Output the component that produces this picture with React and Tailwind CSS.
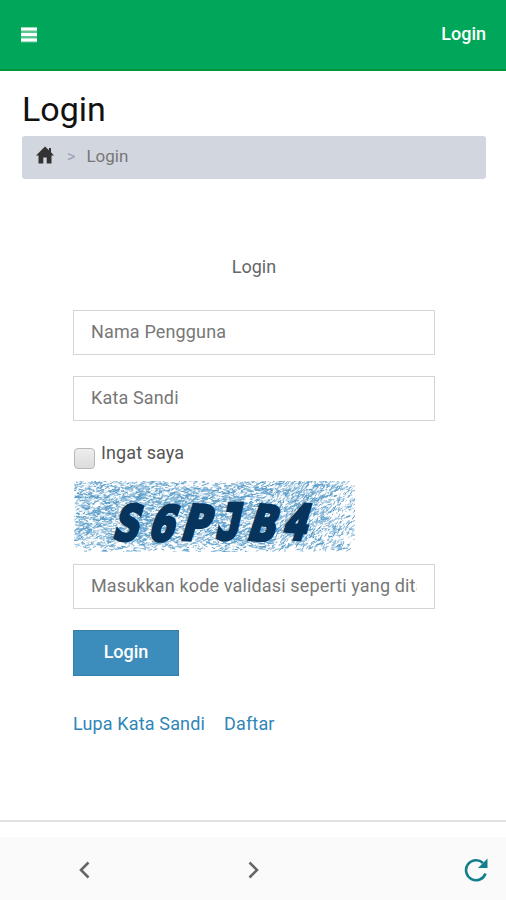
import React from 'react';

// small seeded generator, keeps the captcha noise stable between renders
const createRandom = (seed) => () => {
  seed = (seed * 16807) % 2147483647;
  return seed / 2147483647;
};

// short strokes, flat on the left and steeper towards the right edge
const scratches = (seed, count, maxLength, falloff) => {
  const random = createRandom(seed);
  let d = '';
  for (let i = 0; i < count; i++) {
    const x = random() * 279;
    const y = random() * 71;
    const edge = Math.max(Math.abs(x - 115) / 165, Math.abs(y - 33) / 36);
    if (random() < edge * edge * falloff) continue;
    const slope = x > 195 ? -0.7 : -0.1;
    const angle = slope + (random() - 0.5) * 1.2;
    const length = 1 + random() * maxLength;
    d += `M${x.toFixed(1)} ${y.toFixed(1)}l${(Math.cos(angle) * length).toFixed(1)} ${(Math.sin(angle) * length).toFixed(1)}`;
  }
  return d;
};

const lightScratches = scratches(733, 5200, 7, 0.75);
const blueScratches = scratches(981, 2600, 7, 0.75);
const whiteScratches = scratches(4127, 1500, 4, 0);

const captchaLetters = [
  { char: 'S', x: 38, y: 58, rotate: 3, width: 25 },
  { char: '6', x: 73, y: 58, rotate: 5, width: 25 },
  { char: 'P', x: 106, y: 58, rotate: 4, width: 27 },
  { char: 'J', x: 141, y: 58, rotate: -1, width: 24 },
  { char: 'B', x: 173, y: 58, rotate: 5, width: 25 },
  { char: '4', x: 207, y: 57, rotate: 4, width: 24 },
];

const Captcha = () => (
  <svg className="ml-px block h-[71px] w-[281px]" viewBox="0 0 281 71">
    <rect width="281" height="71" fill="#fff" />
    <path d={lightScratches} stroke="#94bfdc" strokeWidth="1.1" fill="none" />
    <path d={blueScratches} stroke="#5b9dc9" strokeWidth="1" fill="none" />
    <path d={whiteScratches} stroke="#fff" strokeWidth="1.1" fill="none" />
    {captchaLetters.map(({ char, x, y, rotate, width }) => (
      <text
        key={char}
        transform={`translate(${x} ${y}) rotate(${rotate}) skewX(-13)`}
        textLength={width}
        lengthAdjust="spacingAndGlyphs"
        fontFamily="'DejaVu Sans Mono', monospace"
        fontWeight="700"
        fontSize="48"
        fill="#06345c"
        stroke="#06345c"
        strokeWidth="4"
        strokeLinejoin="miter"
      >
        {char}
      </text>
    ))}
  </svg>
);

const Field = ({ placeholder, type = 'text', className = '' }) => (
  <input
    type={type}
    placeholder={placeholder}
    className={`block h-[45px] w-full border border-[#d3d6d9] bg-white px-[17px] pb-[2px] text-[18px] tracking-[0.15px] placeholder:text-[#777] ${className}`}
  />
);

const Header = () => (
  <header className="flex h-[71px] items-center justify-between border-b-2 border-[#009638] bg-[#00a65a] pr-5 pl-[21px] text-white">
    <button aria-label="Menu">
      <svg className="h-4 w-4" viewBox="0 0 16 16">
        <rect width="16" height="15" y="0.5" fill="#5bc68f" />
        <path d="M0 2h16M0 7.5h16M0 13h16" stroke="#fff" strokeWidth="3" />
      </svg>
    </button>
    <a className="pb-[3px] text-[18px] font-medium">Login</a>
  </header>
);

const Breadcrumb = () => (
  <nav className="flex h-[43px] items-center rounded-[3px] bg-[#d2d6de] px-[14px] pb-px text-[17px] text-[#777]">
    <svg className="mb-[5px] h-[18px] w-[18px]" viewBox="0 0 18 18" fill="#333">
      <path d="M9 0.5 L13 4.2 V2 H15 V6.2 L18 9.5 H15.5 V17.5 H10.7 V11.5 H7.3 V17.5 H2.5 V9.5 H0 Z" />
    </svg>
    <span className="ml-[13px] text-[16px] text-[#9aa2b2]">&gt;</span>
    <span className="ml-[11px]">Login</span>
  </nav>
);

const LoginForm = () => (
  <form className="mt-[74px] px-[51px] text-[18px] text-[#555]">
    <p className="text-center leading-[27px] text-[#666]">Login</p>
    <Field placeholder="Nama Pengguna" className="mt-[30px]" />
    <Field placeholder="Kata Sandi" type="password" className="mt-[21px]" />
    <label className="mt-[18px] flex h-[42px] items-start gap-[6px]">
      <input
        type="checkbox"
        className="mt-[9px] ml-[1px] h-[21px] w-[21px] appearance-none rounded-[4px] border-[1.5px] border-[#b8b8b8] bg-linear-to-b from-[#eee] to-[#dcdcdc]"
      />
      <span className="leading-[27px] tracking-[0.1px]">Ingat saya</span>
    </label>
    <Captcha />
    <Field placeholder="Masukkan kode validasi seperti yang ditampilkan" className="mt-[12px]" />
    <button
      type="button"
      className="mt-[21px] block h-[46px] w-[106px] border border-[#367fa9] bg-[#3c8dbc] pb-1 font-medium text-white"
    >
      Login
    </button>
    <div className="mt-[34px] flex gap-[19px] leading-[27px] tracking-[0.15px] text-[#2f86b8]">
      <a>Lupa Kata Sandi</a>
      <a>Daftar</a>
    </div>
  </form>
);

const BottomBar = () => (
  <footer className="mt-auto border-t-2 border-[#dfe3e6] pt-[15px]">
    <div className="flex h-[63px] items-center justify-between bg-[#fafafa] pr-[18px] pl-[78px] pt-[2px]">
      <svg className="h-[18px] w-[12px]" viewBox="0 0 12 18" fill="none" stroke="#666" strokeWidth="2.6">
        <path d="M10.5 1.5 L3 9 L10.5 16.5" />
      </svg>
      <svg className="mr-[47px] h-[18px] w-[12px]" viewBox="0 0 12 18" fill="none" stroke="#666" strokeWidth="2.6">
        <path d="M1.5 1.5 L9 9 L1.5 16.5" />
      </svg>
      <svg className="h-6 w-6" viewBox="0 0 24 24">
        <path d="M21.5 15.5 A10 10 0 1 1 19 5" fill="none" stroke="#147f8c" strokeWidth="2.6" />
        <path d="M23.5 0.5 V10 H14 Z" fill="#147f8c" />
      </svg>
    </div>
  </footer>
);

const App = () => {
  return (
    <div className="flex h-[900px] w-[506px] flex-col overflow-hidden bg-white font-[Roboto,sans-serif]">
      <Header />
      <main className="pt-4 pr-5 pl-[22px]">
        <h1 className="h-[49px] text-[34px] leading-[44px] text-[#111]">Login</h1>
        <Breadcrumb />
        <LoginForm />
      </main>
      <BottomBar />
    </div>
  );
};

export default App;
